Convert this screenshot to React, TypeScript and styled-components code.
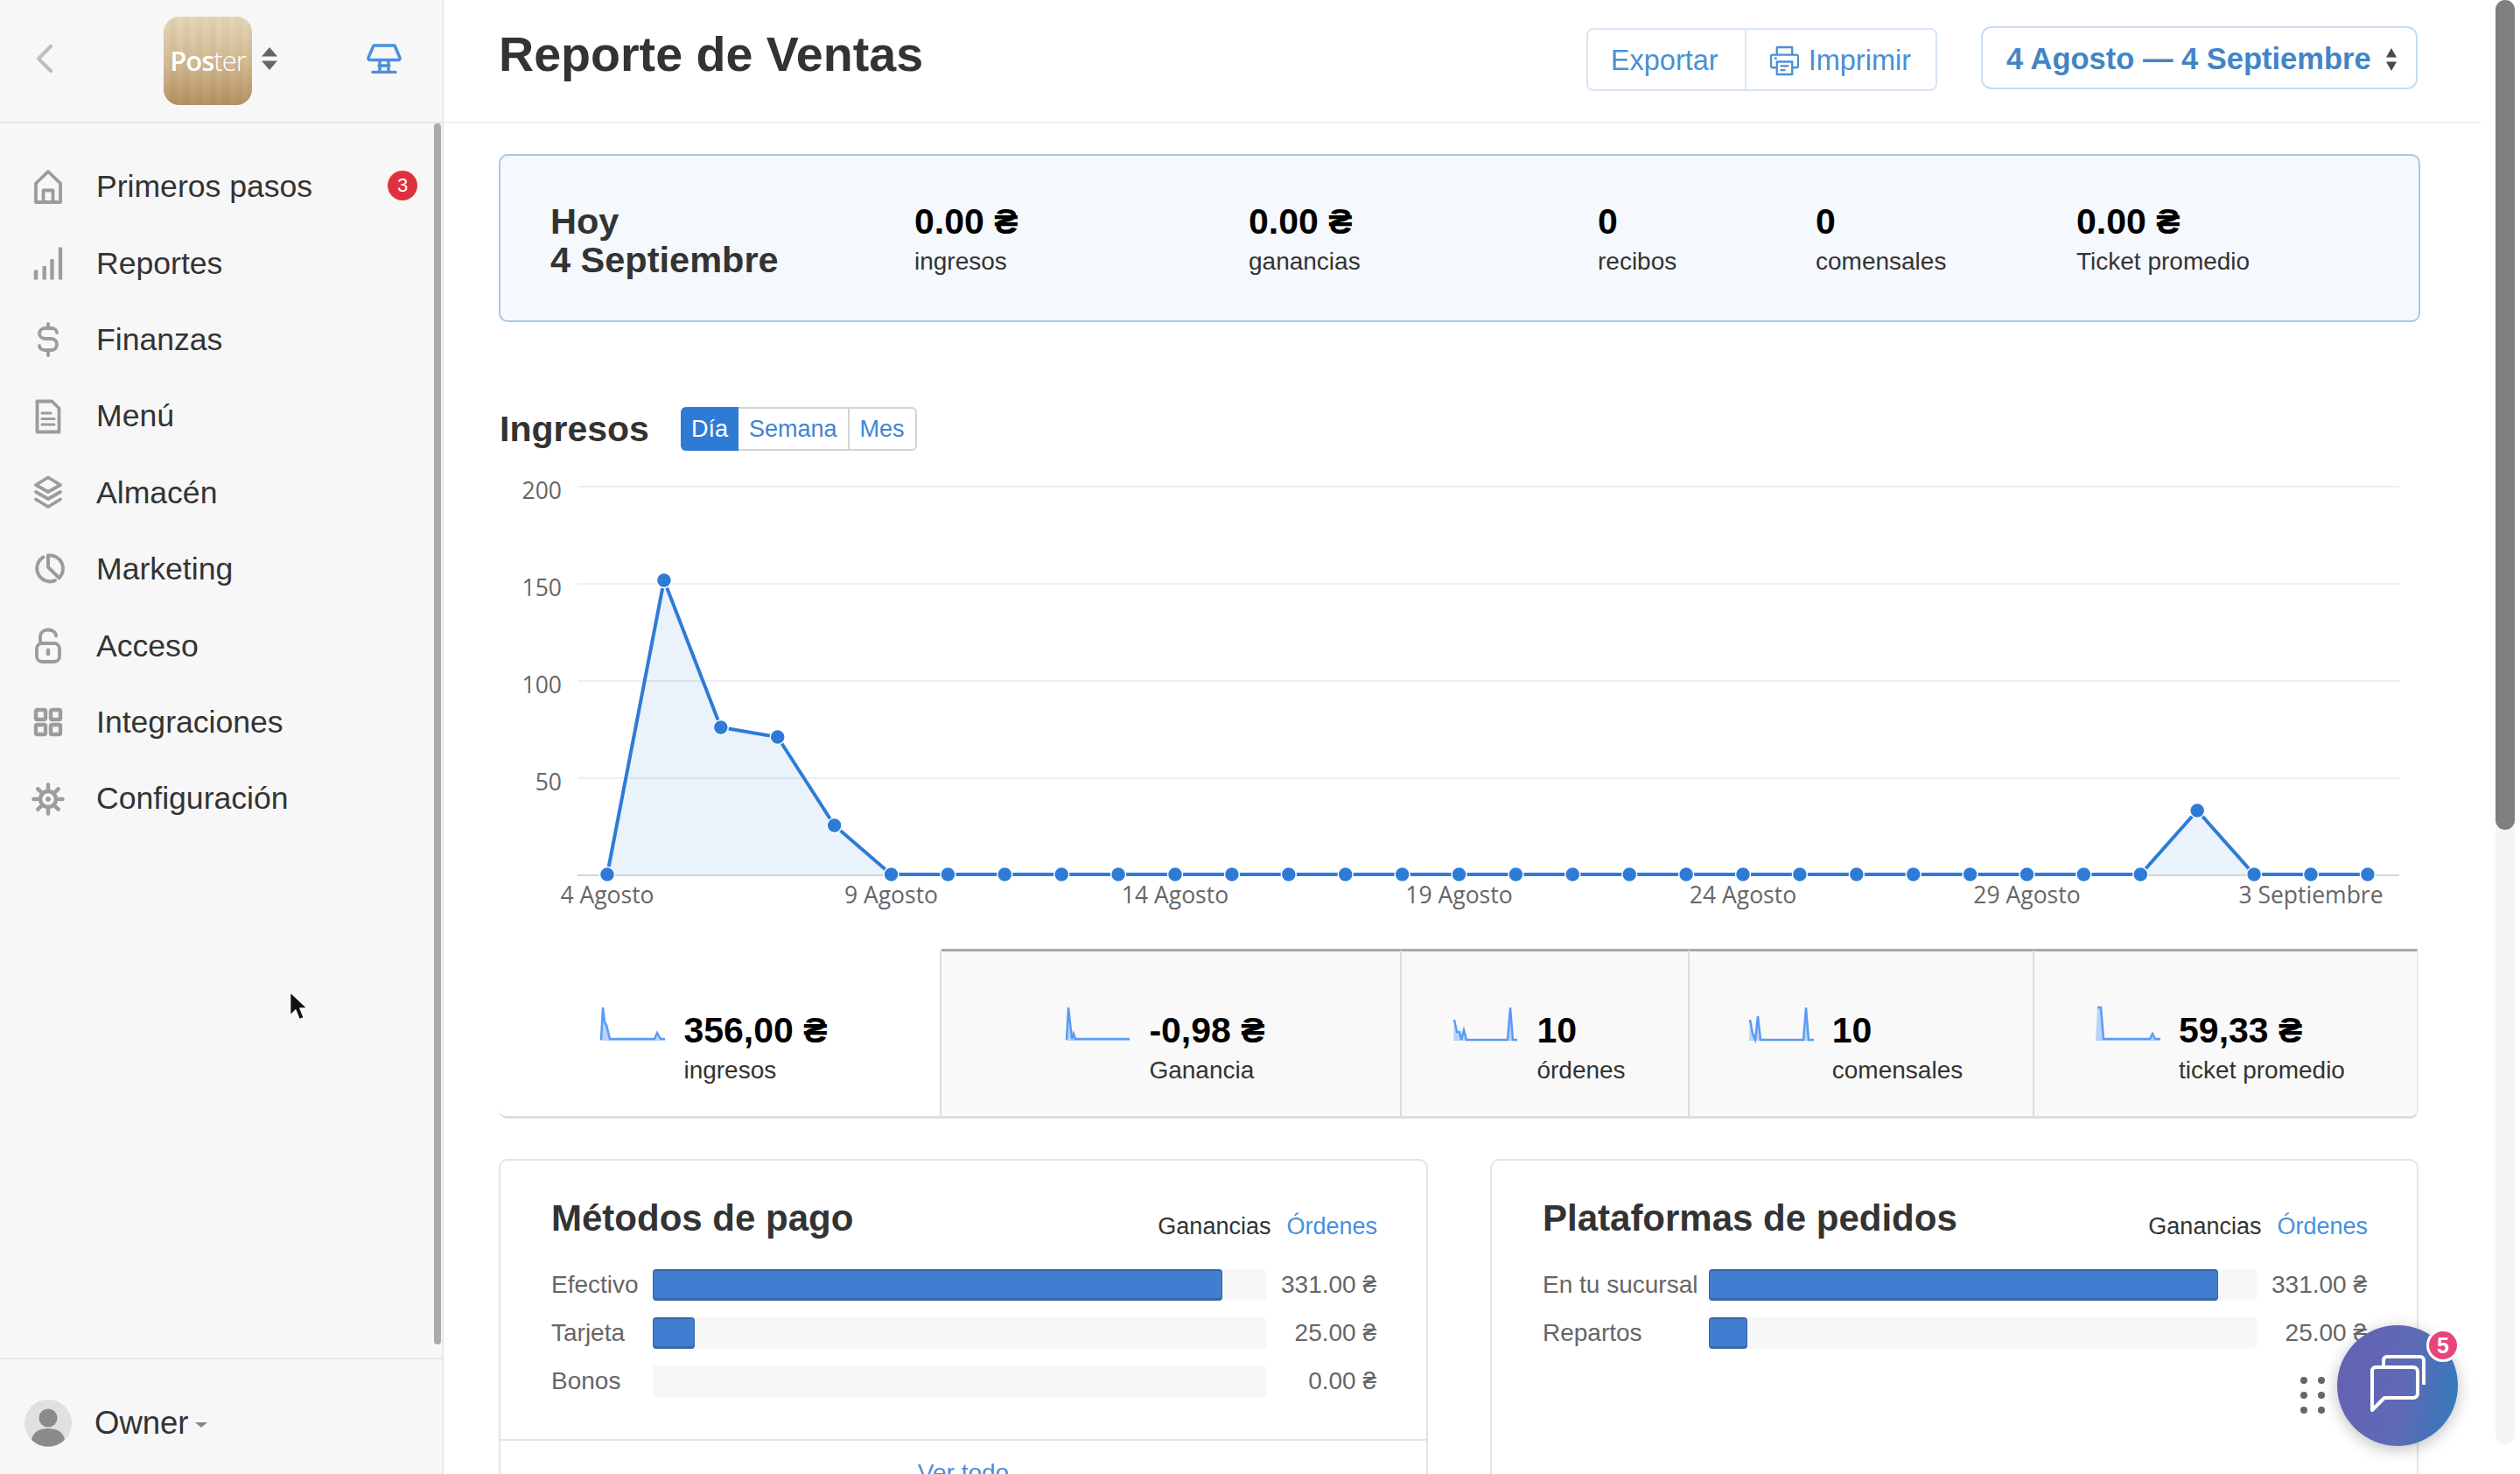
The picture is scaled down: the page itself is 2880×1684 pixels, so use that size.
import React from "react";
import styled, { createGlobalStyle } from "styled-components";

const GlobalStyle = createGlobalStyle`
  html, body {
    margin: 0;
    height: 100%;
    overflow: hidden;
    background: white;
    font-family: "Liberation Sans", Arial, sans-serif;
    color: #333;
  }
  * { box-sizing: border-box; }
`;

const Page = styled.div`
  position: relative;
  display: flex;
  width: 2880px;
  height: 1684px;
  padding-right: 6px;
  overflow: hidden;
`;

/* sidebar */
const Sidebar = styled.aside`
  position: relative;
  flex: 0 0 507px;
  display: flex;
  flex-direction: column;
  background: #f7f7f7;
  border-right: 2px solid #e8e8e8;
`;

const SideTop = styled.div`
  height: 141px;
  flex: none;
  display: flex;
  align-items: center;
  padding: 0 46px 5px 41px;
  border-bottom: 2px solid #e6e6e6;
`;

const Brand = styled.div`
  display: flex;
  align-items: center;
  gap: 11px;
  margin: 0 auto 0 126px;
`;

const LogoTile = styled.div`
  width: 101px;
  height: 101px;
  margin-top: 4px;
  display: flex;
  align-items: center;
  justify-content: center;
  border-radius: 18px;
  background:
    repeating-linear-gradient(90deg, rgba(255, 255, 255, 0.03) 0 7px, rgba(120, 80, 30, 0.03) 7px 15px),
    linear-gradient(180deg, #e4d5b8 0%, #cfb68d 55%, #b48f5f 100%);
  color: white;
  font-family: "Open Sans", sans-serif;
  font-size: 31px;
  letter-spacing: -1px;
`;

const LogoStrong = styled.span`
  font-weight: 600;
`;

const LogoLight = styled.span`
  font-weight: 300;
`;

const Nav = styled.nav`
  flex: 1;
  padding-top: 29px;
`;

const NavItem = styled.a`
  display: flex;
  align-items: center;
  height: 87.4px;
  padding: 0 28px 0 39px;
  color: #333;
  font-size: 35.6px;
`;

const NavIcon = styled.svg`
  flex: none;
  width: 32px;
  height: 40px;
  margin-right: 39px;
  overflow: visible;
  fill: none;
  stroke: #9c9c9c;
  stroke-width: 3.8;
  stroke-linejoin: round;
  stroke-linecap: round;
`;

const NavBadge = styled.span`
  width: 34px;
  height: 34px;
  margin-left: auto;
  margin-top: -3px;
  display: flex;
  align-items: center;
  justify-content: center;
  border-radius: 50%;
  background: #e0303f;
  color: white;
  font-size: 22px;
`;

const SideThumb = styled.div`
  position: absolute;
  top: 141px;
  right: 1px;
  width: 8px;
  height: 1395px;
  border-radius: 4px;
  background: #aaaaaa;
`;

const SideFooter = styled.div`
  height: 133px;
  flex: none;
  display: flex;
  align-items: center;
  padding: 14px 0 0 28px;
  border-top: 2px solid #e6e6e6;
  font-size: 36.500px;
`;

const OwnerAvatar = styled.svg`
  margin-right: 26px;
`;

const Caret = styled.span`
  width: 0;
  height: 0;
  margin: 4px 0 0 7px;
  border-left: 7px solid transparent;
  border-right: 7px solid transparent;
  border-top: 6px solid #888;
`;

/* main */
const Main = styled.main`
  flex: 1;
  min-width: 0;
`;

const Header = styled.header`
  height: 141px;
  margin-right: 17px;
  padding: 0 72px 15px 63px;
  display: flex;
  align-items: center;
  justify-content: space-between;
  border-bottom: 2px solid #efefef;
`;

const Title = styled.h1`
  margin: 0;
  font-size: 55.6px;
  font-weight: 700;
  color: #333;
`;

const Actions = styled.div`
  display: flex;
  align-items: flex-start;
  gap: 50px;
  margin-top: 10px;
`;

const ButtonGroup = styled.div`
  display: flex;
  height: 72px;
  margin-top: 2px;
  border: 2px solid #d7e5f4;
  border-radius: 8px;
`;

const GroupButton = styled.button<{ $divided?: boolean }>`
  display: flex;
  align-items: center;
  gap: 11px;
  padding: ${(p) => (p.$divided ? "3px 28px 0 27px" : "3px 30px 0 26px")};
  border: 0;
  border-left: ${(p) => (p.$divided ? "2px solid #d7e5f4" : "0")};
  background: none;
  color: #4a8fd6;
  font-family: inherit;
  font-size: 32.5px;
`;

const DateButton = styled.button`
  display: flex;
  align-items: center;
  gap: 17px;
  width: 499px;
  height: 72px;
  padding: 3px 0 0 27px;
  border: 2px solid #c9ddf1;
  border-radius: 12px;
  background: white;
  color: #4285c7;
  font-family: inherit;
  font-size: 34.5px;
  font-weight: 700;
  white-space: nowrap;
`;

const Content = styled.div`
  padding: 35px 86px 0 63px;
`;

const Summary = styled.section`
  display: grid;
  grid-template-columns: 416px 382px 399px 249px 298px 1fr;
  align-items: center;
  height: 192px;
  padding-left: 57px;
  border: 2px solid #a9c8e8;
  border-radius: 10px;
  background: #f5f8fd;
`;

const SummaryDate = styled.div`
  margin-top: 6px;
  font-size: 41.5px;
  font-weight: 700;
  line-height: 44px;
  color: #333;
`;

const Value = styled.div`
  font-size: 41px;
  font-weight: 700;
  line-height: 48px;
  color: #000;
  white-space: nowrap;
`;

const Caption = styled.div`
  margin-top: 5px;
  font-size: 28px;
  line-height: 34px;
  color: #333;
  white-space: nowrap;
`;

const SectionHead = styled.div`
  display: flex;
  align-items: center;
  gap: 36px;
  margin-top: 97px;
  padding-left: 1px;
`;

const SectionTitle = styled.h2`
  margin: 0;
  font-size: 41px;
  font-weight: 700;
  color: #333;
`;

const Tabs = styled.div`
  display: flex;
  height: 50px;
  border: 2px solid #d4d4d4;
  border-radius: 6px;
`;

const Tab = styled.span<{ $active?: boolean }>`
  display: flex;
  align-items: center;
  padding: 0 12px;
  margin: ${(p) => (p.$active ? "-2px 0 -2px -2px" : "0")};
  border-left: ${(p) => (p.$active ? "0" : "2px solid #d4d4d4")};
  border-radius: ${(p) => (p.$active ? "6px 0 0 6px" : "0")};
  background: ${(p) => (p.$active ? "#2e7bd6" : "transparent")};
  color: ${(p) => (p.$active ? "white" : "#3f85d5")};
  font-size: 27px;
  &:nth-child(2) {
    border-left: 0;
  }
`;

const ChartSvg = styled.svg`
  display: block;
  width: 2196px;
  height: 554px;
  margin-top: 15px;
`;

const AxisLabel = styled.text`
  font-family: "Open Sans", sans-serif;
  font-size: 26.500px;
  fill: #666;
`;

const Stats = styled.section`
  display: grid;
  grid-template-columns: 506px 526px 329px 394px 438px;
  height: 194px;
`;

const StatCell = styled.div<{ $active?: boolean }>`
  display: flex;
  align-items: center;
  justify-content: center;
  gap: 21px;
  padding: 0 12px 0 0;
  background: ${(p) => (p.$active ? "white" : "#f9f9f9")};
  border-top: ${(p) => (p.$active ? "3px solid transparent" : "3px solid #a8a8a8")};
  border-bottom: 3px solid #dedede;
  border-right: 2px solid #dcdcdc;
  border-radius: ${(p) => (p.$active ? "0 0 0 10px" : "0")};

  &:last-child {
    border-right-width: 1px;
    border-radius: 0 0 8px 0;
  }
`;

const Spark = styled.svg`
  flex: none;
  width: 74px;
  height: 38px;
  margin-top: -22px;
  overflow: visible;
`;

const StatText = styled.div`
  margin-top: 31px;
`;

const Cards = styled.section`
  display: grid;
  grid-template-columns: 1062px 1061px;
  gap: 71px;
  margin-top: 46px;
`;

const Card = styled.article`
  height: 500px;
  border: 2px solid #e4e4e4;
  border-radius: 10px;
`;

const CardHead = styled.div`
  display: flex;
  align-items: flex-start;
  height: 124px;
  padding: 42px 56px 0 58px;
`;

const CardTitle = styled.h3`
  margin: 0 auto 0 0;
  font-size: 42px;
  font-weight: 700;
  color: #333;
`;

const CardToggle = styled.span<{ $link?: boolean }>`
  margin: 18px 0 0 18px;
  font-size: 27px;
  color: ${(p) => (p.$link ? "#4a8fdc" : "#333")};
`;

const BarList = styled.div`
  display: flex;
  flex-direction: column;
  gap: 19px;
  padding: 0 57px 0 58px;
  height: 194px;
`;

const BarRow = styled.div`
  display: flex;
  align-items: center;
  height: 36px;
`;

const BarLabel = styled.span<{ $width: number }>`
  flex: 0 0 ${(p) => p.$width}px;
  font-size: 28px;
  color: #666;
  white-space: nowrap;
`;

const BarTrack = styled.div`
  flex: 1;
  height: 100%;
  border-radius: 4px;
  background: #f7f7f7;
`;

const BarFill = styled.div`
  height: 100%;
  border-radius: 4px;
  border-top: 2px solid #3a66a5;
  border-bottom: 3px solid #3a66a5;
  border-left: 1px solid #3a66a5;
  border-right: 1px solid #3a66a5;
  background: #417dd0;
`;

const BarValue = styled.span`
  flex: 0 0 126px;
  text-align: right;
  font-size: 28px;
  color: #666;
  white-space: nowrap;
`;

const CardFooter = styled.div`
  padding-top: 21px;
  border-top: 2px solid #e4e4e4;
  text-align: center;
  font-size: 28px;
  color: #4a8fdc;
`;

const ScrollTrack = styled.div`
  flex: 0 0 22px;
  height: 1650px;
  background: #f4f4f5;
  border-radius: 11px;
`;

const ScrollThumb = styled.div`
  height: 948px;
  border-radius: 11px;
  background: #7f7f7f;
`;

/* floating chat */
const ChatButton = styled.div`
  position: absolute;
  left: 2671px;
  top: 1514px;
  width: 138px;
  height: 138px;
  border-radius: 50%;
  background: linear-gradient(100deg, #6361b2 0%, #5f6ab5 55%, #2f7bbd 100%);
  box-shadow: 0 4px 18px rgba(0, 0, 0, 0.25);
`;

const ChatBadge = styled.span`
  position: absolute;
  top: 4px;
  right: -2px;
  width: 38px;
  height: 38px;
  display: flex;
  align-items: center;
  justify-content: center;
  border: 3px solid white;
  border-radius: 50%;
  background: #e8457a;
  color: white;
  font-size: 25px;
  font-weight: 700;
`;

const ChatDots = styled.div`
  position: absolute;
  left: 2629px;
  top: 1573px;
  display: grid;
  grid-template-columns: 8px 8px;
  gap: 9px 12px;
`;

const ChatDot = styled.i`
  width: 8px;
  height: 8px;
  border-radius: 50%;
  background: #666;
`;

const Cursor = styled.svg`
  position: absolute;
  left: 329px;
  top: 1132px;
  width: 24px;
  height: 38px;
`;

const navItems: { label: string; icon: React.ReactNode; badge?: number }[] = [
  {
    label: "Primeros pasos",
    badge: 3,
    icon: (
      <>
        <path d="M2 37V15.5L16 2l14 13.5V37Z" />
        <path d="M10.5 37V23.5h11V37" />
      </>
    ),
  },
  {
    label: "Reportes",
    icon: (
      <path
        d="M2 27.5v11M11.7 23v15.5M20.5 15v23.5M30 1.5v37"
        strokeWidth="4.4"
        strokeLinecap="butt"
      />
    ),
  },
  {
    label: "Finanzas",
    icon: (
      <path d="M26 12c0-3-3-5-6-5h-7c-4 0-7 2.500-7 6s3 6 7 6h6c4 0 7 2.500 7 6.500S23 32 19 32h-6c-4 0-7-2-7-5M16 2v5M16 32v6" />
    ),
  },
  {
    label: "Menú",
    icon: (
      <>
        <path d="M3.500 2.500h17l8 8v27h-25Z" />
        <path d="M9 16h10M9 22.500h14M9 29h14" strokeWidth="3" />
      </>
    ),
  },
  {
    label: "Almacén",
    icon: (
      <>
        <path d="M16 2.500 30 11l-14 8-14-8Z" />
        <path d="M2 19l14 8 14-8M2 27.500l14 8.500 14-8.500" />
      </>
    ),
  },
  {
    label: "Marketing",
    icon: (
      <g strokeWidth="4">
        <path d="M16 3.600A15 15 0 0 1 28.500 29.200L16 17Z" />
        <path d="M10.500 5.500A15 15 0 0 0 24 32.200" />
      </g>
    ),
  },
  {
    label: "Acceso",
    icon: (
      <>
        <path d="M7 17V9.500C7 4.500 11 1.500 16 1.500s9 3 9 7" />
        <rect x="3" y="17" width="26" height="21" rx="6" />
        <path d="M16 25v4" strokeWidth="4.500" />
      </>
    ),
  },
  {
    label: "Integraciones",
    icon: (
      <g strokeWidth="4.4">
        <rect x="2" y="6" width="11" height="11" rx="1.500" />
        <rect x="19" y="6" width="11" height="11" rx="1.500" />
        <rect x="2" y="23" width="11" height="11" rx="1.500" />
        <rect x="19" y="23" width="11" height="11" rx="1.500" />
      </g>
    ),
  },
  {
    label: "Configuración",
    icon: (
      <>
        <circle cx="16" cy="20" r="9" strokeWidth="4.500" />
        <circle cx="16" cy="20" r="2.500" fill="#9c9c9c" strokeWidth="1" />
        <path d="M16 3.500v4M16 32.500v4M-.5 20h4M28.500 20h4M4.300 8.300l2.900 2.900M24.800 28.800l2.900 2.900M4.300 31.700l2.900-2.900M24.800 11.200l2.900-2.900" strokeWidth="4.500" />
      </>
    ),
  },
];

const summaryStats = [
  { value: "0.00 ₴", label: "ingresos" },
  { value: "0.00 ₴", label: "ganancias" },
  { value: "0", label: "recibos" },
  { value: "0", label: "comensales" },
  { value: "0.00 ₴", label: "Ticket promedio" },
];

const sparkShapes = {
  ingresos: "0,38 1,37 3,0 5,17 7,20 11,36 62,36 65,29 69,36 74,36 74,38",
  ganancia: "0,38 1,37 3,0 7,36 9,30 11,36 73,36 73,38",
  ordenes: "0,38 1,14 4,28 7,28 9,37 12,26 15,37 62,37 65,0 68,37 73,37 73,38",
  comensales: "0,38 1,14 4,30 7,37 10,10 13,37 62,37 65,0 68,37 74,37 74,38",
  ticket: "0,38 2,0 6,0 9,36 62,36 65,30 68,36 74,36 74,38",
};

const statCells = [
  { value: "356,00 ₴", label: "ingresos", spark: sparkShapes.ingresos, active: true },
  { value: "-0,98 ₴", label: "Ganancia", spark: sparkShapes.ganancia },
  { value: "10", label: "órdenes", spark: sparkShapes.ordenes },
  { value: "10", label: "comensales", spark: sparkShapes.comensales },
  { value: "59,33 ₴", label: "ticket promedio", spark: sparkShapes.ticket },
];

// chart coordinates, offset from the section's top left corner
const CHART_X = 570;
const CHART_Y = 530;
const pointYs = [999, 663, 831, 842, 943, 999];
const chartPoints = Array.from({ length: 32 }, (_, i) => ({
  x: 694 + i * 64.9 - CHART_X,
  y: (i === 28 ? 926 : i < pointYs.length ? pointYs[i] : 999) - CHART_Y,
}));
const gridLines = [
  { y: 556, label: "200" },
  { y: 667, label: "150" },
  { y: 778, label: "100" },
  { y: 889, label: "50" },
];
const xLabels = ["4 Agosto", "9 Agosto", "14 Agosto", "19 Agosto", "24 Agosto", "29 Agosto", "3 Septiembre"];

const polyline = chartPoints.map((p) => `${p.x},${p.y}`).join(" ");
const first = chartPoints[0];
const last = chartPoints[chartPoints.length - 1];
const areaPoints = `${first.x},470 ${polyline} ${last.x},470`;

const SalesChart = () => (
  <ChartSvg viewBox="0 0 2196 554">
    {gridLines.map((g) => (
      <g key={g.label}>
        <line x1={90} x2={2172} y1={g.y - CHART_Y} y2={g.y - CHART_Y} stroke="#efefef" strokeWidth="2" />
        <AxisLabel x={72} y={g.y - CHART_Y + 14} textAnchor="end">
          {g.label}
        </AxisLabel>
      </g>
    ))}
    <polygon points={areaPoints} fill="#2e7bd6" fillOpacity="0.1" />
    <line x1={90} x2={2172} y1={470} y2={470} stroke="#ccd6e0" strokeWidth="2" />
    <polyline points={polyline} fill="none" stroke="#2e7bd6" strokeWidth="4" />
    {chartPoints.map((p) => (
      <circle key={p.x} cx={p.x} cy={p.y} r="8.500" fill="#2e7bd6" stroke="white" strokeWidth="1.500" />
    ))}
    {xLabels.map((label, i) => (
      <AxisLabel key={label} x={chartPoints[i * 5].x} y={502} textAnchor="middle">
        {label}
      </AxisLabel>
    ))}
  </ChartSvg>
);

const PrinterIcon = () => (
  <svg width="33" height="35" viewBox="0 0 34 36" fill="none" stroke="#4a8fd6" strokeWidth="2.4" strokeLinejoin="round">
    <path d="M8 11V2h18v9" />
    <path d="M8 26H3c-1 0-2-1-2-2V13c0-1 1-2 2-2h28c1 0 2 1 2 2v11c0 1-1 2-2 2h-5" />
    <path d="M8 19h18v15H8Z" />
    <path d="M12 24h10M12 29h6M5 15h3" />
  </svg>
);

const SortArrows = ({ width, height, color }: { width: number; height: number; color: string }) => (
  <svg width={width} height={height} viewBox="0 0 18 27" preserveAspectRatio="none" fill={color}>
    <path d="M9 0l9 11H0ZM9 27 0 16h18Z" />
  </svg>
);

const bars = (rows: { label: string; value: string; pct: number }[], labelWidth: number) => (
  <BarList>
    {rows.map((r) => (
      <BarRow key={r.label}>
        <BarLabel $width={labelWidth}>{r.label}</BarLabel>
        <BarTrack>
          {r.pct > 0 && <BarFill style={{ width: `${r.pct}%` }} />}
        </BarTrack>
        <BarValue>{r.value}</BarValue>
      </BarRow>
    ))}
  </BarList>
);

const App: React.FC = () => (
  <Page>
    <GlobalStyle />
    <Sidebar>
      <SideTop>
        <svg width="20" height="32" viewBox="0 0 20 32" fill="none" stroke="#bdbdbd" strokeWidth="4" strokeLinecap="round" strokeLinejoin="round">
          <path d="M17 2 3 16l14 14" />
        </svg>
        <Brand>
          <LogoTile>
            <LogoStrong>Pos</LogoStrong>
            <LogoLight>ter</LogoLight>
          </LogoTile>
          <SortArrows width={18} height={26} color="#666" />
        </Brand>
        <svg width="40" height="34" viewBox="0 0 40 34" fill="none" stroke="#4a8fdc" strokeWidth="3.4" strokeLinejoin="round" strokeLinecap="round">
          <path d="M8 2h24l6 14c.5 1.500-.5 2.500-2 2.500H4c-1.500 0-2.500-1-2-2.500Z" />
          <path d="M15 18.500V32M25 18.500V32M7 32.500h26M14 25h12" />
        </svg>
      </SideTop>
      <Nav>
        {navItems.map((item) => (
          <NavItem key={item.label}>
            <NavIcon viewBox="0 0 32 40">{item.icon}</NavIcon>
            {item.label}
            {item.badge && <NavBadge>{item.badge}</NavBadge>}
          </NavItem>
        ))}
      </Nav>
      <SideThumb />
      <SideFooter>
        <OwnerAvatar width="54" height="54" viewBox="0 0 54 54">
          <circle cx="27" cy="27" r="27" fill="#e0e0e0" />
          <circle cx="27" cy="21" r="10.500" fill="#8a8a8a" />
          <path d="M8 46c2-10 10-13 19-13s17 3 19 13a27 27 0 0 1-38 0Z" fill="#8a8a8a" />
        </OwnerAvatar>
        Owner
        <Caret />
      </SideFooter>
    </Sidebar>

    <Main>
      <Header>
        <Title>Reporte de Ventas</Title>
        <Actions>
          <ButtonGroup>
            <GroupButton>Exportar</GroupButton>
            <GroupButton $divided>
              <PrinterIcon />
              Imprimir
            </GroupButton>
          </ButtonGroup>
          <DateButton>
            4 Agosto — 4 Septiembre
            <SortArrows width={12} height={26} color="#4a4a4a" />
          </DateButton>
        </Actions>
      </Header>

      <Content>
        <Summary>
          <SummaryDate>
            Hoy
            <br />4 Septiembre
          </SummaryDate>
          {summaryStats.map((s) => (
            <div key={s.label}>
              <Value>{s.value}</Value>
              <Caption>{s.label}</Caption>
            </div>
          ))}
        </Summary>

        <SectionHead>
          <SectionTitle>Ingresos</SectionTitle>
          <Tabs>
            <Tab $active>Día</Tab>
            <Tab>Semana</Tab>
            <Tab>Mes</Tab>
          </Tabs>
        </SectionHead>

        <SalesChart />

        <Stats>
          {statCells.map((c) => (
            <StatCell key={c.label} $active={c.active}>
              <Spark viewBox="0 0 74 38">
                <polygon points={c.spark} fill="#b9d4fa" />
                <polyline points={c.spark.split(" ").slice(1, -1).join(" ")} fill="none" stroke="#5b9bf5" strokeWidth="2.500" />
              </Spark>
              <StatText>
                <Value>{c.value}</Value>
                <Caption>{c.label}</Caption>
              </StatText>
            </StatCell>
          ))}
        </Stats>

        <Cards>
          <Card>
            <CardHead>
              <CardTitle>Métodos de pago</CardTitle>
              <CardToggle>Ganancias</CardToggle>
              <CardToggle $link>Órdenes</CardToggle>
            </CardHead>
            {bars(
              [
                { label: "Efectivo", value: "331.00 ₴", pct: 92.9 },
                { label: "Tarjeta", value: "25.00 ₴", pct: 6.9 },
                { label: "Bonos", value: "0.00 ₴", pct: 0 },
              ],
              116
            )}
            <CardFooter>Ver todo</CardFooter>
          </Card>
          <Card>
            <CardHead>
              <CardTitle>Plataformas de pedidos</CardTitle>
              <CardToggle>Ganancias</CardToggle>
              <CardToggle $link>Órdenes</CardToggle>
            </CardHead>
            {bars(
              [
                { label: "En tu sucursal", value: "331.00 ₴", pct: 93 },
                { label: "Repartos", value: "25.00 ₴", pct: 7 },
              ],
              190
            )}
          </Card>
        </Cards>
      </Content>
    </Main>

    <ScrollTrack>
      <ScrollThumb />
    </ScrollTrack>

    <ChatDots>
      {[0, 1, 2, 3, 4, 5].map((d) => (
        <ChatDot key={d} />
      ))}
    </ChatDots>
    <ChatButton>
      <svg width="138" height="138" viewBox="0 0 138 138" fill="none" stroke="white" strokeWidth="4" strokeLinejoin="round">
        <path d="M53 46V40a4 4 0 0 1 4-4H95a4 4 0 0 1 4 4V68" />
        <path d="M40 97V52a4 4 0 0 1 4-4H87a5 5 0 0 1 5 5V78a5 5 0 0 1-5 5H54Z" />
      </svg>
      <ChatBadge>5</ChatBadge>
    </ChatButton>

    <Cursor viewBox="0 0 22 36">
      <path d="M2 1v26l6-6 4 10 5-2-4-10h8Z" fill="#111" stroke="white" strokeWidth="1.500" />
    </Cursor>
  </Page>
);

export default App;
